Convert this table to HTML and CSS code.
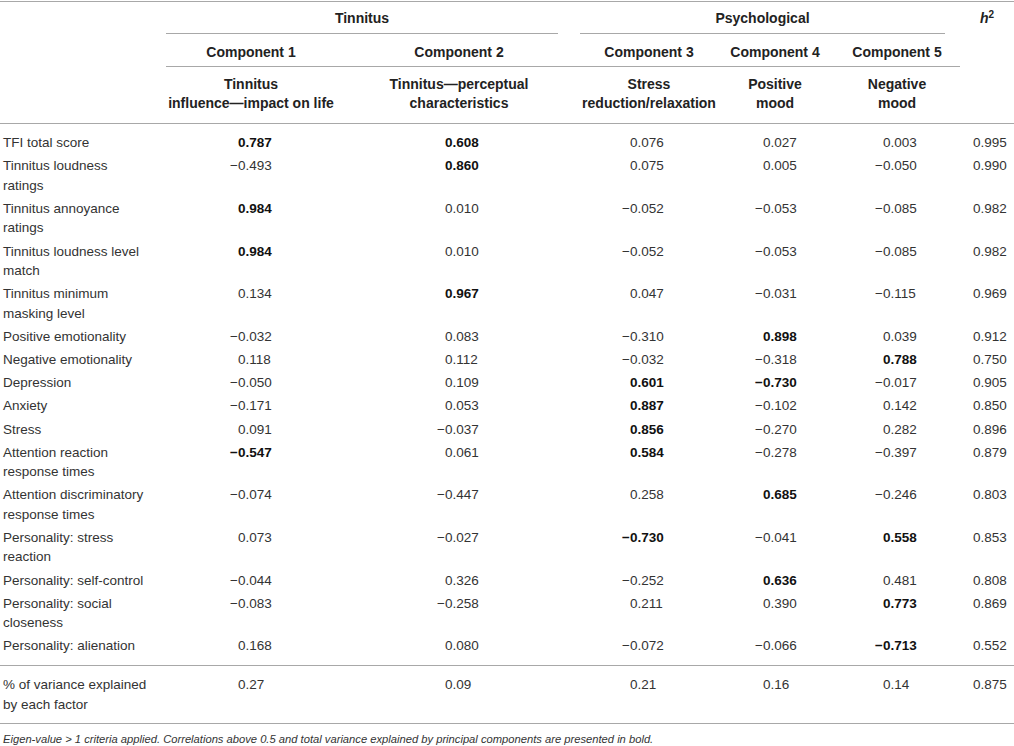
FILE: index.html
```html
<!DOCTYPE html>
<html lang="en">
<head>
<meta charset="utf-8">
<title>Principal components table</title>
<link rel="stylesheet" href="styles.css">
</head>
<body>
<table class="pca">
  <colgroup>
    <col class="c-label">
    <col class="c-1">
    <col class="c-2">
    <col class="c-3">
    <col class="c-4">
    <col class="c-5">
    <col class="c-h">
  </colgroup>
  <thead>
    <tr class="hr1">
      <th class="blank" rowspan="3"></th>
      <th class="grp" colspan="2"><div class="grp-t">Tinnitus</div></th>
      <th class="grp" colspan="3"><div class="grp-p">Psychological</div></th>
      <th class="hsq" rowspan="3"><i>h</i><sup>2</sup></th>
    </tr>
    <tr class="hr2">
      <th>Component 1</th>
      <th>Component 2</th>
      <th>Component 3</th>
      <th>Component 4</th>
      <th>Component 5</th>
    </tr>
    <tr class="hr3">
      <th>Tinnitus<br>influence—impact on life</th>
      <th>Tinnitus—perceptual<br>characteristics</th>
      <th>Stress<br>reduction/relaxation</th>
      <th>Positive<br>mood</th>
      <th>Negative<br>mood</th>
    </tr>
  </thead>
  <tbody>
    <tr class="first">
      <td class="lbl">TFI total score</td>
      <td class="n1 b">0.787</td><td class="n2 b">0.608</td><td class="n3">0.076</td><td class="n4">0.027</td><td class="n5">0.003</td><td class="nh">0.995</td>
    </tr>
    <tr>
      <td class="lbl">Tinnitus loudness ratings</td>
      <td class="n1"><span class="mn">−</span>0.493</td><td class="n2 b">0.860</td><td class="n3">0.075</td><td class="n4">0.005</td><td class="n5"><span class="mn">−</span>0.050</td><td class="nh">0.990</td>
    </tr>
    <tr>
      <td class="lbl">Tinnitus annoyance ratings</td>
      <td class="n1 b">0.984</td><td class="n2">0.010</td><td class="n3"><span class="mn">−</span>0.052</td><td class="n4"><span class="mn">−</span>0.053</td><td class="n5"><span class="mn">−</span>0.085</td><td class="nh">0.982</td>
    </tr>
    <tr>
      <td class="lbl">Tinnitus loudness level match</td>
      <td class="n1 b">0.984</td><td class="n2">0.010</td><td class="n3"><span class="mn">−</span>0.052</td><td class="n4"><span class="mn">−</span>0.053</td><td class="n5"><span class="mn">−</span>0.085</td><td class="nh">0.982</td>
    </tr>
    <tr>
      <td class="lbl">Tinnitus minimum masking level</td>
      <td class="n1">0.134</td><td class="n2 b">0.967</td><td class="n3">0.047</td><td class="n4"><span class="mn">−</span>0.031</td><td class="n5"><span class="mn">−</span>0.115</td><td class="nh">0.969</td>
    </tr>
    <tr>
      <td class="lbl">Positive emotionality</td>
      <td class="n1"><span class="mn">−</span>0.032</td><td class="n2">0.083</td><td class="n3"><span class="mn">−</span>0.310</td><td class="n4 b">0.898</td><td class="n5">0.039</td><td class="nh">0.912</td>
    </tr>
    <tr>
      <td class="lbl">Negative emotionality</td>
      <td class="n1">0.118</td><td class="n2">0.112</td><td class="n3"><span class="mn">−</span>0.032</td><td class="n4"><span class="mn">−</span>0.318</td><td class="n5 b">0.788</td><td class="nh">0.750</td>
    </tr>
    <tr>
      <td class="lbl">Depression</td>
      <td class="n1"><span class="mn">−</span>0.050</td><td class="n2">0.109</td><td class="n3 b">0.601</td><td class="n4 b"><span class="mn">−</span>0.730</td><td class="n5"><span class="mn">−</span>0.017</td><td class="nh">0.905</td>
    </tr>
    <tr>
      <td class="lbl">Anxiety</td>
      <td class="n1"><span class="mn">−</span>0.171</td><td class="n2">0.053</td><td class="n3 b">0.887</td><td class="n4"><span class="mn">−</span>0.102</td><td class="n5">0.142</td><td class="nh">0.850</td>
    </tr>
    <tr>
      <td class="lbl">Stress</td>
      <td class="n1">0.091</td><td class="n2"><span class="mn">−</span>0.037</td><td class="n3 b">0.856</td><td class="n4"><span class="mn">−</span>0.270</td><td class="n5">0.282</td><td class="nh">0.896</td>
    </tr>
    <tr>
      <td class="lbl">Attention reaction response times</td>
      <td class="n1 b"><span class="mn">−</span>0.547</td><td class="n2">0.061</td><td class="n3 b">0.584</td><td class="n4"><span class="mn">−</span>0.278</td><td class="n5"><span class="mn">−</span>0.397</td><td class="nh">0.879</td>
    </tr>
    <tr>
      <td class="lbl">Attention discriminatory response times</td>
      <td class="n1"><span class="mn">−</span>0.074</td><td class="n2"><span class="mn">−</span>0.447</td><td class="n3">0.258</td><td class="n4 b">0.685</td><td class="n5"><span class="mn">−</span>0.246</td><td class="nh">0.803</td>
    </tr>
    <tr>
      <td class="lbl">Personality: stress reaction</td>
      <td class="n1">0.073</td><td class="n2"><span class="mn">−</span>0.027</td><td class="n3 b"><span class="mn">−</span>0.730</td><td class="n4"><span class="mn">−</span>0.041</td><td class="n5 b">0.558</td><td class="nh">0.853</td>
    </tr>
    <tr>
      <td class="lbl">Personality: self-control</td>
      <td class="n1"><span class="mn">−</span>0.044</td><td class="n2">0.326</td><td class="n3"><span class="mn">−</span>0.252</td><td class="n4 b">0.636</td><td class="n5">0.481</td><td class="nh">0.808</td>
    </tr>
    <tr>
      <td class="lbl">Personality: social closeness</td>
      <td class="n1"><span class="mn">−</span>0.083</td><td class="n2"><span class="mn">−</span>0.258</td><td class="n3">0.211</td><td class="n4">0.390</td><td class="n5 b">0.773</td><td class="nh">0.869</td>
    </tr>
    <tr class="last">
      <td class="lbl">Personality: alienation</td>
      <td class="n1">0.168</td><td class="n2">0.080</td><td class="n3"><span class="mn">−</span>0.072</td><td class="n4"><span class="mn">−</span>0.066</td><td class="n5 b"><span class="mn">−</span>0.713</td><td class="nh">0.552</td>
    </tr>
    <tr class="var">
      <td class="lbl">% of variance explained by each factor</td>
      <td class="n1">0.27</td><td class="n2">0.09</td><td class="n3">0.21</td><td class="n4">0.16</td><td class="n5">0.14</td><td class="nh">0.875</td>
    </tr>
  </tbody>
</table>
<p class="note">Eigen-value &gt; 1 criteria applied. Correlations above 0.5 and total variance explained by principal components are presented in bold.</p>
</body>
</html>
```
FILE: styles.css
```css
html, body {
  margin: 0;
  padding: 0;
  background: #ffffff;
}

body {
  font-family: "Liberation Sans", Arial, Helvetica, sans-serif;
  color: #333333;
}

.pca {
  width: 1014px;
  table-layout: fixed;
  border-collapse: collapse;
  border-spacing: 0;
  margin-top: 1px;
  border-top: 1px solid #a8a8a8;
}

.c-label { width: 166px; }
.c-1 { width: 170px; }
.c-2 { width: 246px; }
.c-3 { width: 134px; }
.c-4 { width: 118px; }
.c-5 { width: 126px; }
.c-h { width: 54px; }

.pca th {
  font-size: 14px;
  font-weight: bold;
  color: #222222;
  text-align: center;
  white-space: nowrap;
  padding: 0;
  vertical-align: top;
}

.pca th.blank,
.pca th.hsq {
  border-bottom: 1px solid #a8a8a8;
}

.pca th.hsq {
  line-height: 20px;
  padding-top: 6px;
}

.hsq sup {
  font-size: 10px;
  line-height: 0;
  font-style: normal;
  vertical-align: 5px;
}

.grp-t,
.grp-p {
  line-height: 20px;
  padding: 6px 0 5px;
  border-bottom: 1px solid #a8a8a8;
}

.grp-t { margin-right: 24px; }
.grp-p { margin-right: 15px; margin-left: -2px; }

.hr2 th {
  line-height: 20px;
  padding: 8px 0 4px;
  border-bottom: 1px solid #a8a8a8;
}

.hr3 th {
  line-height: 19px;
  padding: 8px 0 10px;
  border-bottom: 1px solid #a8a8a8;
}

.pca td {
  font-size: 13.5px;
  line-height: 19.4px;
  padding-top: 1.9px;
  padding-bottom: 1.9px;
  vertical-align: top;
  text-align: left;
  white-space: nowrap;
}

.pca td.lbl {
  white-space: normal;
  padding-left: 3px;
  padding-right: 17px;
}

.pca td.b {
  font-weight: bold;
  color: #111111;
}

.pca td.n1 { padding-left: 72px; }
.pca td.n2 { padding-left: 109px; }
.pca td.n3 { padding-left: 48px; }
.pca td.n4 { padding-left: 47px; }
.pca td.n5 { padding-left: 49px; }
.pca td.nh { padding-left: 13px; }

.mn {
  display: inline-block;
  width: 10.5px;
  margin-left: -10.5px;
  text-align: right;
}

.pca tr.first td { padding-top: 9.3px; }
.pca tr.last td { padding-bottom: 9.1px; }

.pca tr.var td {
  border-top: 1px solid #a8a8a8;
  border-bottom: 1px solid #a8a8a8;
  padding-top: 9.3px;
  padding-bottom: 9px;
}

.note {
  margin: 0;
  padding: 8px 0 0 3px;
  font-size: 11.2px;
  line-height: 14px;
  font-style: italic;
  color: #333333;
}
```
